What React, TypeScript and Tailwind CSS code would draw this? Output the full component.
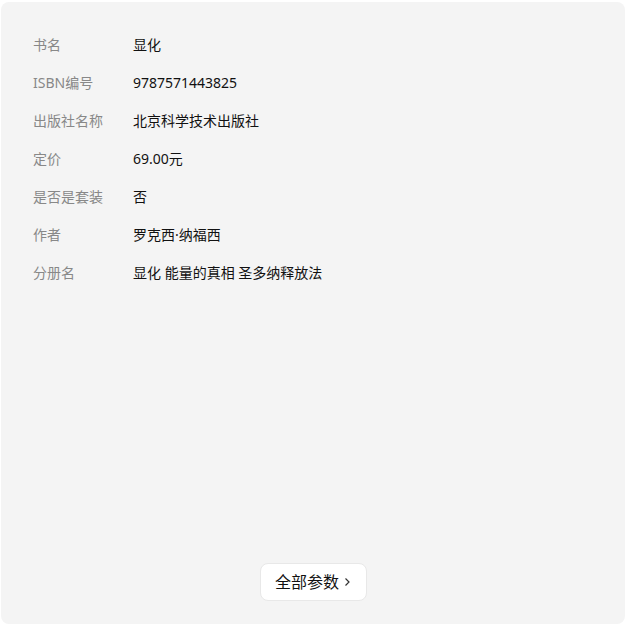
import React from 'react';

const rows: [string, string][] = [
  ['书名', '显化'],
  ['ISBN编号', '9787571443825'],
  ['出版社名称', '北京科学技术出版社'],
  ['定价', '69.00元'],
  ['是否是套装', '否'],
  ['作者', '罗克西·纳福西'],
  ['分册名', '显化 能量的真相 圣多纳释放法'],
];

const App: React.FC = () => {
  return (
    <div
      className="w-[626px] h-[626px] bg-white pt-[2px] pl-[1px]"
      style={{ fontFamily: '"Noto Sans", "Noto Sans CJK SC", sans-serif' }}
    >
      <div className="w-[624px] h-[622px] bg-[#f4f4f4] rounded-[8px] flex flex-col pt-[23px] pb-[23px] px-8">
        {/* param rows */}
        <div className="flex flex-col">
          {rows.map(([k, v]) => (
            <div key={k} className="flex items-center h-[38px] text-[14px]">
              <span className="w-[100px] text-[#888888]">{k}</span>
              <span className="text-[#111111]">{v}</span>
            </div>
          ))}
        </div>

        <div className="flex-1" />

        <div className="flex justify-center">
          <button className="w-[107px] h-[38px] bg-white border border-[#e8e8e8] rounded-[8px] flex items-center justify-center gap-1 text-[16px] text-[#111111]">
            全部参数
            <svg width="8" height="10" viewBox="0 0 8 10" fill="none">
              <path d="M2.5 1.5 L6 5 L2.5 8.5" stroke="#333" strokeWidth="1.2" />
            </svg>
          </button>
        </div>
      </div>
    </div>
  );
};

export default App;
